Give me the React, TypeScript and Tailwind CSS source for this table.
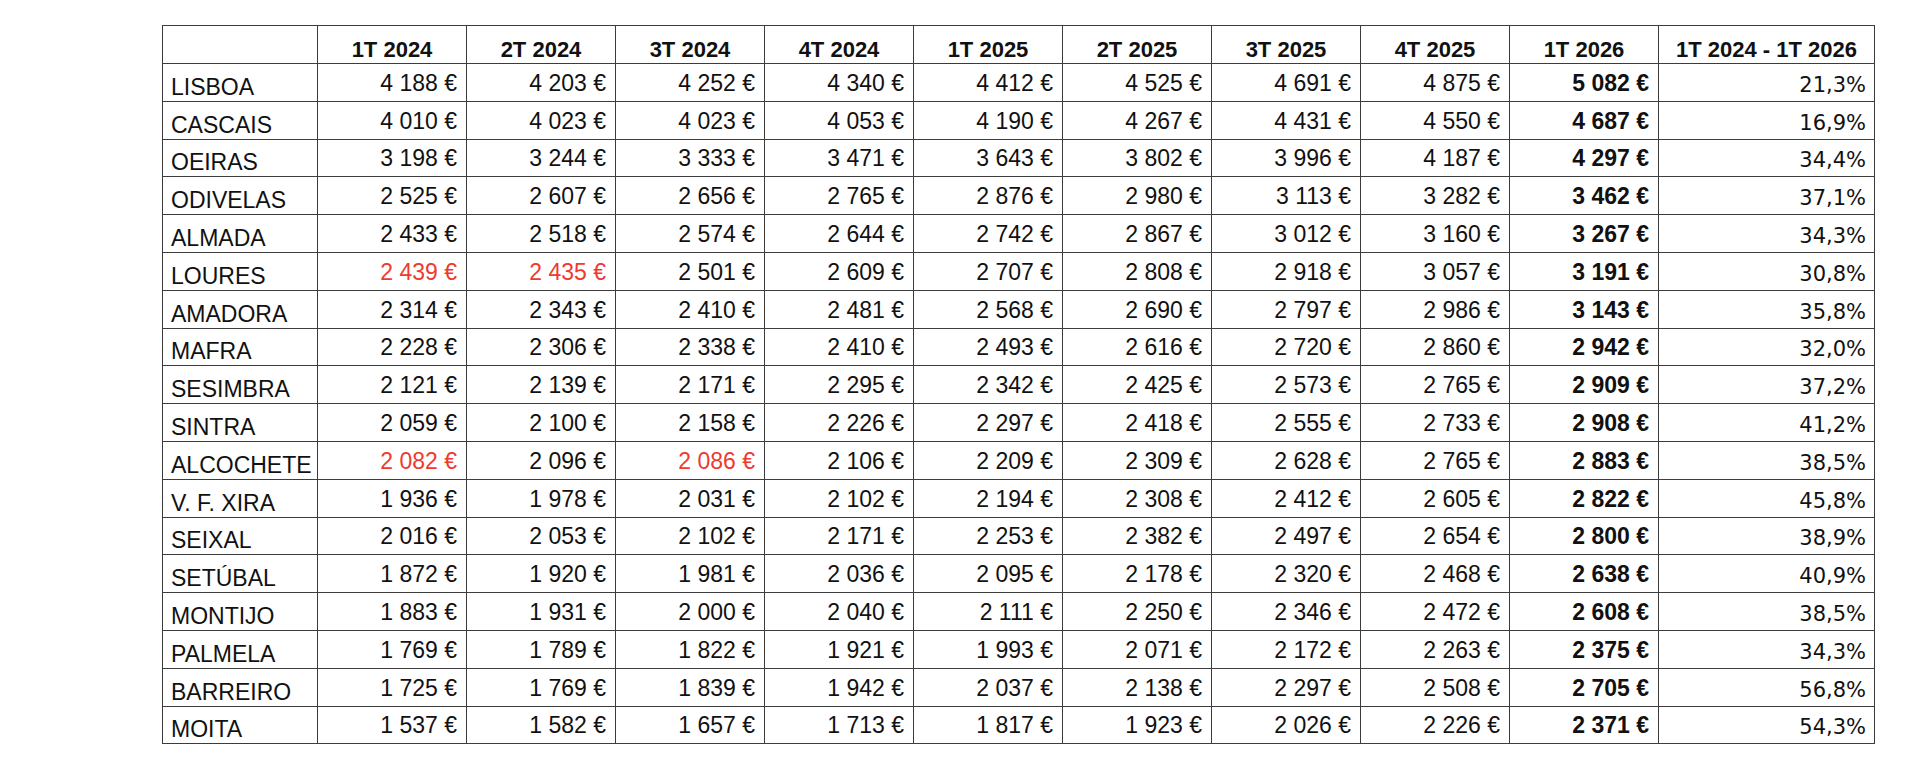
const quarters = ['1T 2024', '2T 2024', '3T 2024', '4T 2024', '1T 2025', '2T 2025', '3T 2025', '4T 2025', '1T 2026'];

// values in euros; red marks the cells flagged in the source
type Row = { name: string; values: string[]; red?: number[]; change: string };

const rows: Row[] = [
  { name: 'LISBOA', values: ['4 188', '4 203', '4 252', '4 340', '4 412', '4 525', '4 691', '4 875', '5 082'], change: '21,3%' },
  { name: 'CASCAIS', values: ['4 010', '4 023', '4 023', '4 053', '4 190', '4 267', '4 431', '4 550', '4 687'], change: '16,9%' },
  { name: 'OEIRAS', values: ['3 198', '3 244', '3 333', '3 471', '3 643', '3 802', '3 996', '4 187', '4 297'], change: '34,4%' },
  { name: 'ODIVELAS', values: ['2 525', '2 607', '2 656', '2 765', '2 876', '2 980', '3 113', '3 282', '3 462'], change: '37,1%' },
  { name: 'ALMADA', values: ['2 433', '2 518', '2 574', '2 644', '2 742', '2 867', '3 012', '3 160', '3 267'], change: '34,3%' },
  { name: 'LOURES', values: ['2 439', '2 435', '2 501', '2 609', '2 707', '2 808', '2 918', '3 057', '3 191'], red: [0, 1], change: '30,8%' },
  { name: 'AMADORA', values: ['2 314', '2 343', '2 410', '2 481', '2 568', '2 690', '2 797', '2 986', '3 143'], change: '35,8%' },
  { name: 'MAFRA', values: ['2 228', '2 306', '2 338', '2 410', '2 493', '2 616', '2 720', '2 860', '2 942'], change: '32,0%' },
  { name: 'SESIMBRA', values: ['2 121', '2 139', '2 171', '2 295', '2 342', '2 425', '2 573', '2 765', '2 909'], change: '37,2%' },
  { name: 'SINTRA', values: ['2 059', '2 100', '2 158', '2 226', '2 297', '2 418', '2 555', '2 733', '2 908'], change: '41,2%' },
  { name: 'ALCOCHETE', values: ['2 082', '2 096', '2 086', '2 106', '2 209', '2 309', '2 628', '2 765', '2 883'], red: [0, 2], change: '38,5%' },
  { name: 'V. F. XIRA', values: ['1 936', '1 978', '2 031', '2 102', '2 194', '2 308', '2 412', '2 605', '2 822'], change: '45,8%' },
  { name: 'SEIXAL', values: ['2 016', '2 053', '2 102', '2 171', '2 253', '2 382', '2 497', '2 654', '2 800'], change: '38,9%' },
  { name: 'SETÚBAL', values: ['1 872', '1 920', '1 981', '2 036', '2 095', '2 178', '2 320', '2 468', '2 638'], change: '40,9%' },
  { name: 'MONTIJO', values: ['1 883', '1 931', '2 000', '2 040', '2 111', '2 250', '2 346', '2 472', '2 608'], change: '38,5%' },
  { name: 'PALMELA', values: ['1 769', '1 789', '1 822', '1 921', '1 993', '2 071', '2 172', '2 263', '2 375'], change: '34,3%' },
  { name: 'BARREIRO', values: ['1 725', '1 769', '1 839', '1 942', '2 037', '2 138', '2 297', '2 508', '2 705'], change: '56,8%' },
  { name: 'MOITA', values: ['1 537', '1 582', '1 657', '1 713', '1 817', '1 923', '2 026', '2 226', '2 371'], change: '54,3%' },
];

export default function App() {
  return (
    <div className="min-h-screen bg-white pl-[162px] pt-[25px] text-[#111] font-['Liberation_Sans',Arial,sans-serif]">
      <table className="table-fixed border-collapse w-[1712px] text-[23px] leading-none">
        <colgroup>
          <col className="w-[155px]" />
          {quarters.map((q) => (
            <col key={q} className="w-[149px]" />
          ))}
          <col className="w-[216px]" />
        </colgroup>
        <thead>
          <tr className="h-[38px]">
            <th className="border border-[#3c3c3c]" />
            {quarters.map((q) => (
              <th key={q} className="border border-[#3c3c3c] align-bottom pb-[2px] text-[22px] font-bold text-center">
                {q}
              </th>
            ))}
            <th className="border border-[#3c3c3c] align-bottom pb-[2px] text-[22px] font-bold text-center">1T 2024 - 1T 2026</th>
          </tr>
        </thead>
        <tbody>
          {rows.map((row) => (
            <tr key={row.name} className="h-[37.8px]">
              <td className="border border-[#3c3c3c] align-bottom pl-[8px] pb-[2px] whitespace-nowrap">{row.name}</td>
              {row.values.map((v, i) => (
                <td
                  key={i}
                  className={`border border-[#3c3c3c] align-bottom text-right pr-[9px] pb-[6px] whitespace-nowrap ${
                    row.red?.includes(i) ? 'text-[#ef3a2d]' : ''
                  } ${i === 8 ? 'font-bold' : ''}`}
                >
                  {v} €
                </td>
              ))}
              <td className="border border-[#3c3c3c] align-bottom text-right pr-[8px] pb-[5px] text-[21px] font-['DejaVu_Sans',sans-serif]">
                {row.change}
              </td>
            </tr>
          ))}
        </tbody>
      </table>
    </div>
  );
}
